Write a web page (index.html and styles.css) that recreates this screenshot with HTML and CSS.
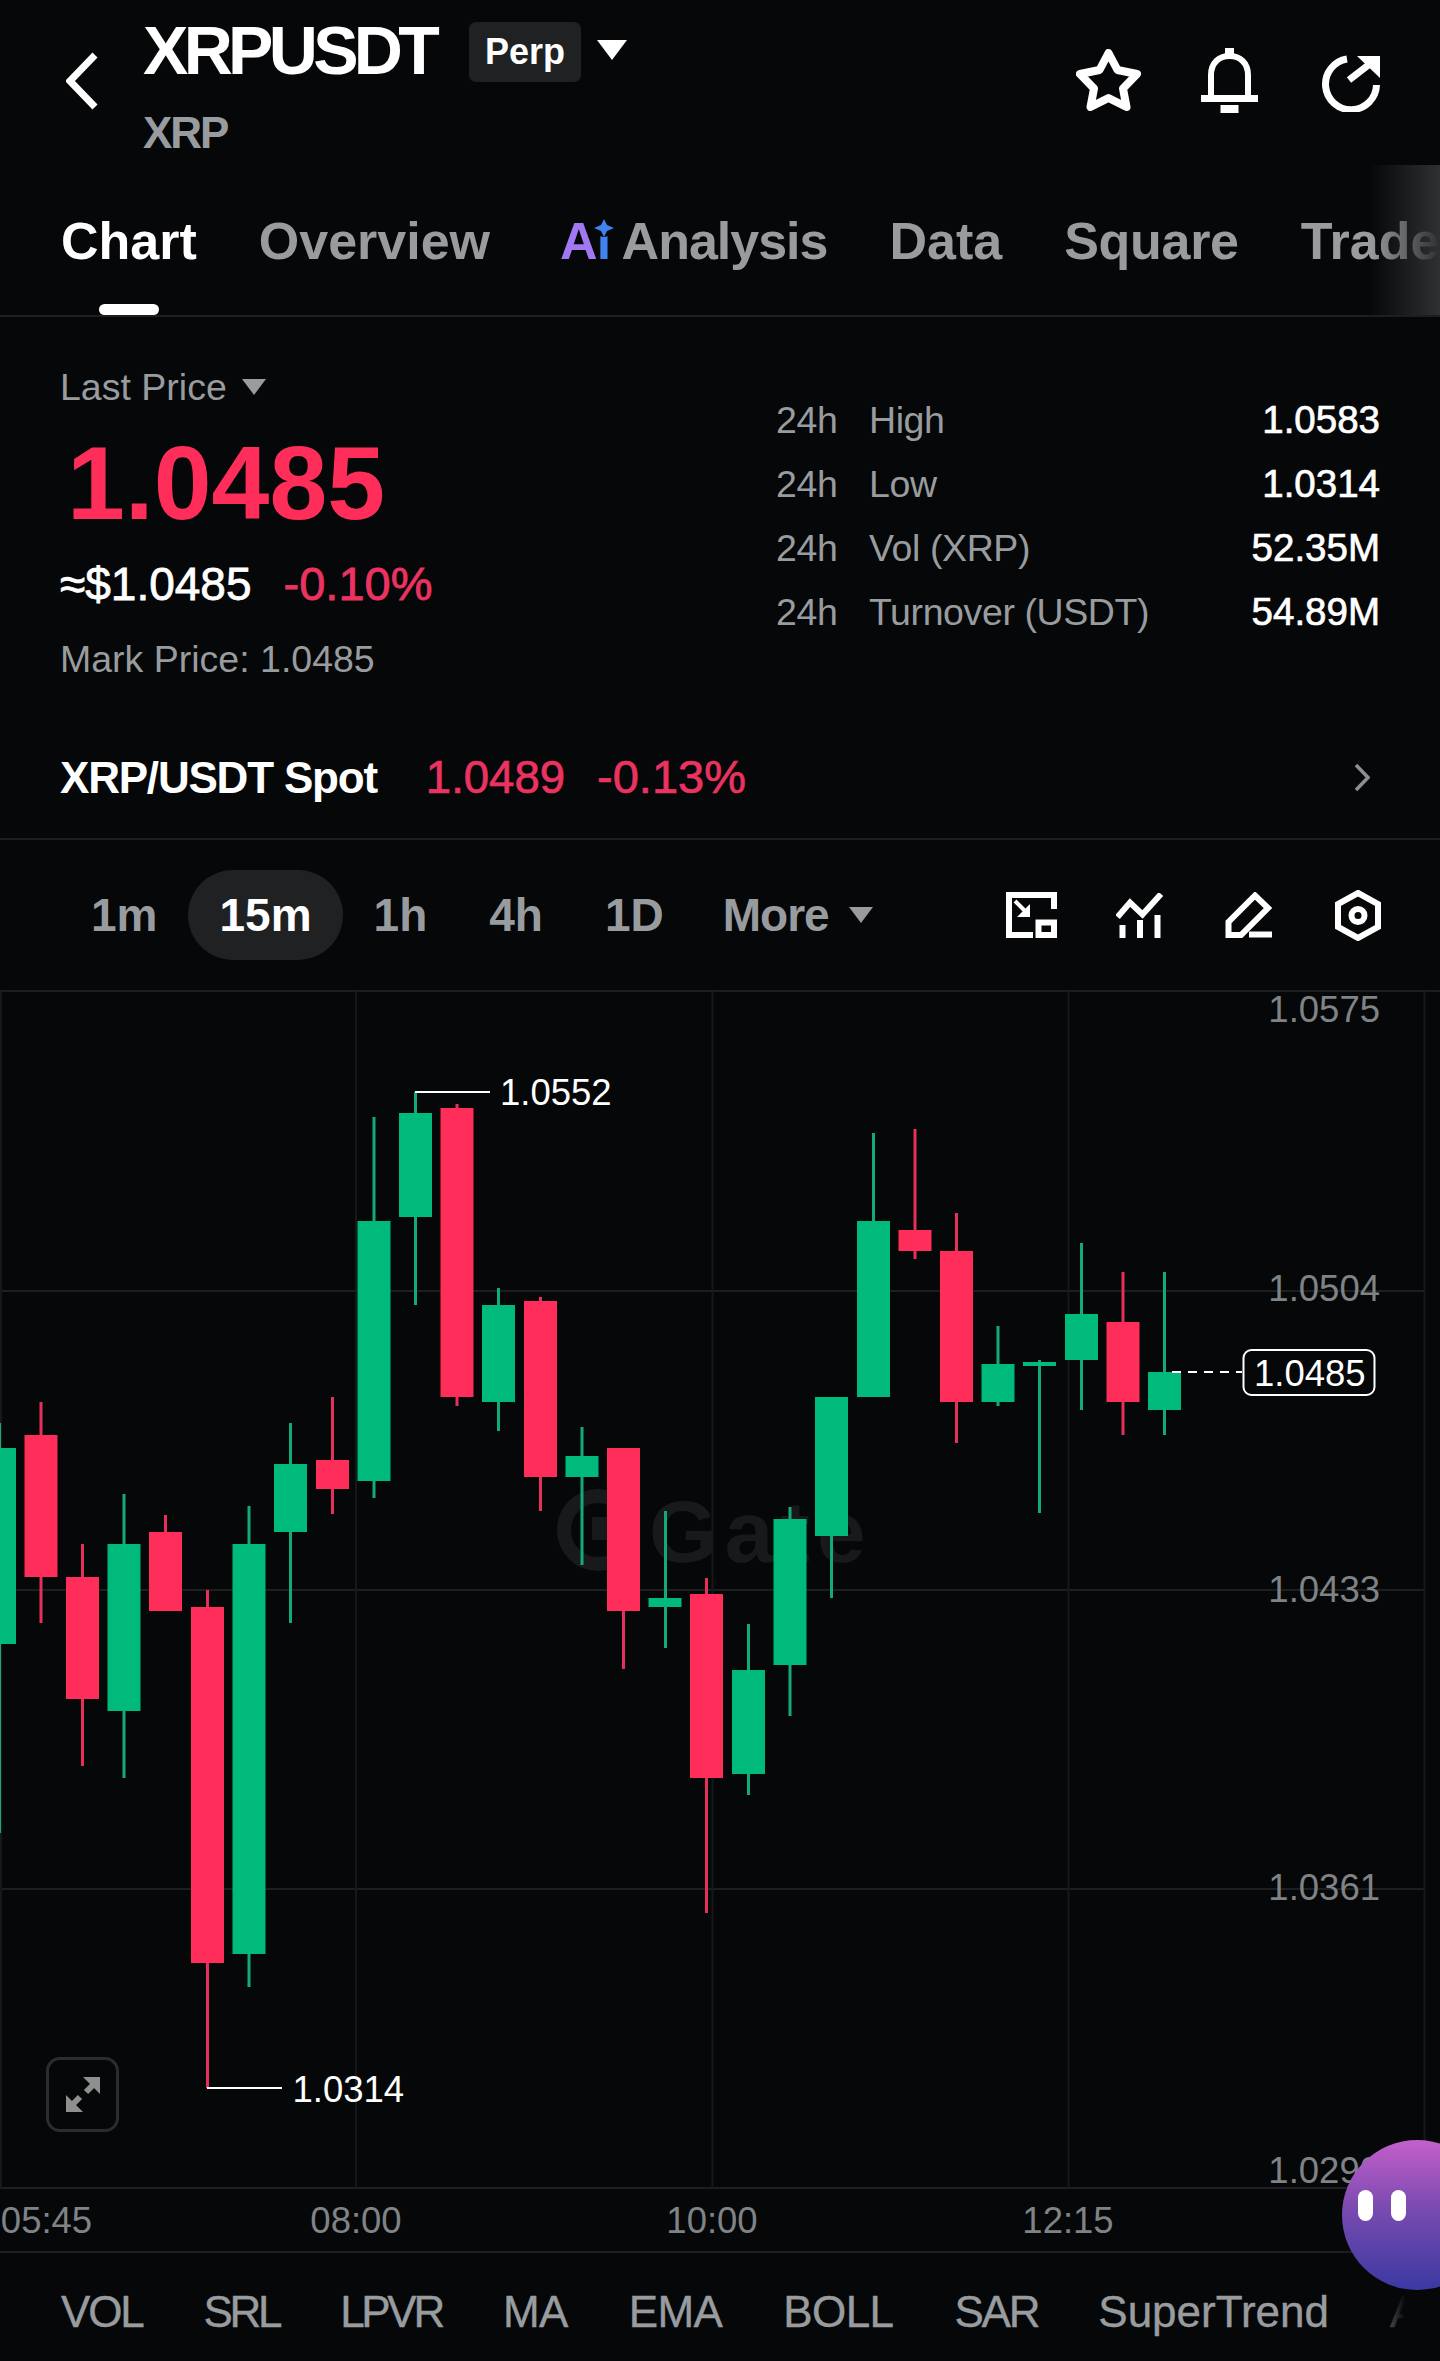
FILE: index.html
```html
<!DOCTYPE html>
<html lang="en">
<head>
    <meta charset="UTF-8">
    <meta name="viewport" content="width=device-width, initial-scale=1.0">
    <title>XRPUSDT Perp</title>
    <link rel="stylesheet" href="styles.css">
</head>
<body>
    <div class="page">
        <header class="topbar">
            <svg class="back-icon" viewBox="0 0 33 58"><path d="M29 3 L4 29 L29 55"/></svg>
            <div class="title-block">
                <div class="title-row">
                    <h1 class="symbol">XRPUSDT</h1>
                    <span class="perp-badge">Perp</span>
                    <span class="caret caret-white"></span>
                </div>
                <div class="base-coin">XRP</div>
            </div>
            <div class="top-icons">
                <svg class="star-icon" viewBox="0 0 65 62"><path d="M32.500 4 L41.500 21 L61 25 L47 39.500 L50.500 58 L32.500 49 L14.500 58 L18 39.500 L4 25 L23.500 21 Z"/></svg>
                <svg class="bell-icon" viewBox="0 0 57 65">
                    <path class="icon-line" d="M10 49 V27 C10 15 18 8 28.500 8 C39 8 47 15 47 27 V49"/>
                    <rect x="24" y="0" width="9" height="8"/>
                    <rect x="0" y="47" width="57" height="7"/>
                    <rect x="19.500" y="57" width="18" height="8"/>
                </svg>
                <svg class="share-icon" viewBox="0 0 59 58">
                    <path class="icon-line" d="M26 5 A 25.500 25.500 0 1 0 55.500 31"/>
                    <path class="icon-line" d="M28 26 L50 9"/>
                    <polygon points="36,2 59,2 59,24"/>
                </svg>
            </div>
        </header>

        <nav class="tabs">
            <a class="tab is-active">Chart</a>
            <a class="tab">Overview</a>
            <a class="tab tab-ai"><span class="ai-mark"><span class="ai-a">A</span><span class="ai-i">i</span><svg class="ai-star" viewBox="0 0 20 18"><path d="M10 0 L13 6 L20 9 L13 12 L10 18 L7 12 L0 9 L7 6 Z"/></svg></span> Analysis</a>
            <a class="tab">Data</a>
            <a class="tab tab-tight">Square</a>
            <a class="tab">Trade</a>
            <div class="tabs-fade"></div>
        </nav>

        <section class="stats">
            <div class="stats-main">
                <div class="price-col">
                    <div class="price-type">Last Price <span class="caret caret-gray"></span></div>
                    <div class="last-price">1.0485</div>
                    <div class="price-sub"><span class="usd-price">≈$1.0485</span><span class="price-change">-0.10%</span></div>
                    <div class="mark-price">Mark Price: 1.0485</div>
                </div>
                <dl class="ticker">
                    <div class="ticker-row"><dt><span class="ticker-span">24h</span>High</dt><dd>1.0583</dd></div>
                    <div class="ticker-row"><dt><span class="ticker-span">24h</span>Low</dt><dd>1.0314</dd></div>
                    <div class="ticker-row"><dt><span class="ticker-span">24h</span>Vol (XRP)</dt><dd>52.35M</dd></div>
                    <div class="ticker-row"><dt><span class="ticker-span">24h</span>Turnover (USDT)</dt><dd>54.89M</dd></div>
                </dl>
            </div>
            <div class="spot-row">
                <span class="spot-name">XRP/USDT Spot</span>
                <span class="spot-price">1.0489</span>
                <span class="spot-change">-0.13%</span>
                <svg class="spot-arrow" viewBox="0 0 16 29"><path d="M2 2 L14 14.500 L2 27"/></svg>
            </div>
        </section>

        <div class="timeframes">
            <button class="tf">1m</button>
            <button class="tf is-active">15m</button>
            <button class="tf">1h</button>
            <button class="tf">4h</button>
            <button class="tf">1D</button>
            <button class="tf tf-more">More <span class="caret caret-gray"></span></button>
            <div class="tf-icons">
                <svg class="tf-icon-1" viewBox="0 0 51 46">
                    <path class="icon-line" d="M27 43 H3 V3 H48 V17"/>
                    <rect class="icon-line" x="32.500" y="30.500" width="15.500" height="12.500"/>
                    <path class="icon-line thin" d="M9 9 L20 20"/>
                    <polygon points="24,12 24,25 11,25"/>
                </svg>
                <svg class="tf-icon-2" viewBox="0 0 47 45">
                    <path class="icon-line" d="M1.500 24 L14 9.500 L26.500 21.500 L45 1"/>
                    <rect x="3.500" y="32" width="6" height="13"/>
                    <rect x="21" y="27" width="6" height="18"/>
                    <rect x="38.500" y="22" width="6" height="23"/>
                </svg>
                <svg class="tf-icon-3" viewBox="0 0 47 46">
                    <path class="icon-line" d="M30 3.500 L43 16 L16 43 H3.500 V30 Z"/>
                    <rect x="24" y="39.500" width="23" height="6"/>
                </svg>
                <svg class="tf-icon-4" viewBox="0 0 46 51">
                    <path class="icon-line" d="M23 3 L43 14 V37 L23 48 L3 37 V14 Z"/>
                    <circle class="icon-line" cx="23" cy="25.500" r="6.500"/>
                </svg>
            </div>
        </div>

        <div class="chart">
            <svg class="chart-canvas" viewBox="0 990 1440 1265">
                <g class="grid">
                    <path d="M0 991 H1440 M0 1291 H1424 M0 1590 H1424 M0 1889 H1424 M0 2188 H1440 M0 2252 H1440"/>
                    <path d="M1 991 V2188 M356 991 V2188 M712.500 991 V2188 M1068.500 991 V2188 M1424.500 991 V2188"/>
                </g>

                <g class="watermark">
                    <path class="watermark-ring" d="M623 1507 A 34 34 0 1 0 623 1553"/>
                    <rect x="592" y="1517" width="22" height="23"/>
                    <text x="649" y="1562">Gate</text>
                </g>

                <g class="wick-up">
                    <rect x="-2" y="1423" width="3" height="410"/>
                    <rect x="122.500" y="1494" width="3" height="284"/>
                    <rect x="247.500" y="1506" width="3" height="481"/>
                    <rect x="289" y="1423" width="3" height="200"/>
                    <rect x="372.500" y="1117" width="3" height="381"/>
                    <rect x="414" y="1092" width="3" height="213"/>
                    <rect x="497" y="1288" width="3" height="143"/>
                    <rect x="580.500" y="1427" width="3" height="138"/>
                    <rect x="664" y="1511" width="3" height="137"/>
                    <rect x="747" y="1624" width="3" height="171"/>
                    <rect x="788.500" y="1507" width="3" height="209"/>
                    <rect x="830" y="1397" width="3" height="201"/>
                    <rect x="872" y="1133" width="3" height="264"/>
                    <rect x="996.500" y="1326" width="3" height="80"/>
                    <rect x="1038" y="1360" width="3" height="153"/>
                    <rect x="1080" y="1243" width="3" height="167"/>
                    <rect x="1163" y="1272" width="3" height="163"/>
                </g>
                <g class="wick-down">
                    <rect x="39.500" y="1402" width="3" height="221"/>
                    <rect x="81" y="1544" width="3" height="222"/>
                    <rect x="164" y="1515" width="3" height="96"/>
                    <rect x="206" y="1590" width="3" height="498"/>
                    <rect x="331" y="1397" width="3" height="117"/>
                    <rect x="455.500" y="1104" width="3" height="302"/>
                    <rect x="539" y="1297" width="3" height="214"/>
                    <rect x="622" y="1448" width="3" height="221"/>
                    <rect x="705" y="1578" width="3" height="335"/>
                    <rect x="913.500" y="1129" width="3" height="130"/>
                    <rect x="955" y="1213" width="3" height="230"/>
                    <rect x="1121.500" y="1272" width="3" height="163"/>
                </g>
                <g class="body-up">
                    <rect x="-17" y="1448" width="33" height="196"/>
                    <rect x="107.500" y="1544" width="33" height="167"/>
                    <rect x="232.500" y="1544" width="33" height="410"/>
                    <rect x="274" y="1464" width="33" height="68"/>
                    <rect x="357.500" y="1221" width="33" height="260"/>
                    <rect x="399" y="1113" width="33" height="104"/>
                    <rect x="482" y="1305" width="33" height="97"/>
                    <rect x="565.500" y="1456" width="33" height="21"/>
                    <rect x="648.500" y="1598" width="33" height="9"/>
                    <rect x="732" y="1670" width="33" height="104"/>
                    <rect x="773.500" y="1519" width="33" height="146"/>
                    <rect x="815" y="1397" width="33" height="139"/>
                    <rect x="857" y="1221" width="33" height="176"/>
                    <rect x="981.500" y="1364" width="33" height="38"/>
                    <rect x="1023" y="1362" width="33" height="4"/>
                    <rect x="1065" y="1314" width="33" height="46"/>
                    <rect x="1148" y="1372" width="33" height="38"/>
                </g>
                <g class="body-down">
                    <rect x="24.500" y="1435" width="33" height="142"/>
                    <rect x="66" y="1577" width="33" height="122"/>
                    <rect x="149" y="1532" width="33" height="79"/>
                    <rect x="191" y="1607" width="33" height="356"/>
                    <rect x="316" y="1460" width="33" height="29"/>
                    <rect x="440.500" y="1108" width="33" height="289"/>
                    <rect x="524" y="1301" width="33" height="176"/>
                    <rect x="607" y="1448" width="33" height="163"/>
                    <rect x="690" y="1594" width="33" height="184"/>
                    <rect x="898.500" y="1230" width="33" height="21"/>
                    <rect x="940" y="1251" width="33" height="151"/>
                    <rect x="1106.500" y="1322" width="33" height="80"/>
                </g>

                <path class="marker-line" d="M415 1092 H490 M207 2088 H282"/>
                <path class="last-dash" d="M1172 1372 H1242"/>
                <rect class="last-box" x="1243.500" y="1350" width="131" height="45" rx="8"/>

                <text class="marker-label" x="500" y="1105">1.0552</text>
                <text class="marker-label" x="292.500" y="2102">1.0314</text>
                <text class="marker-label" x="1254" y="1386">1.0485</text>

                <g class="axis-price">
                    <text x="1380" y="1022">1.0575</text>
                    <text x="1380" y="1301">1.0504</text>
                    <text x="1380" y="1602">1.0433</text>
                    <text x="1380" y="1900">1.0361</text>
                    <text x="1380" y="2183">1.0290</text>
                </g>
                <g class="axis-time">
                    <text x="46.500" y="2233">05:45</text>
                    <text x="356" y="2233">08:00</text>
                    <text x="712" y="2233">10:00</text>
                    <text x="1068" y="2233">12:15</text>
                </g>
            </svg>
            <button class="expand-btn">
                <svg viewBox="0 0 34 35">
                    <polygon points="17,0 34,0 34,17"/>
                    <polygon points="0,18 0,35 17,35"/>
                    <path class="expand-shaft" d="M27 8 L20 15 M14 20 L7 27"/>
                </svg>
            </button>
        </div>

        <div class="indicators">
            <a class="ind">VOL</a>
            <a class="ind ind-tight">SRL</a>
            <a class="ind ind-tight">LPVR</a>
            <a class="ind ind-loose">MA</a>
            <a class="ind ind-loose">EMA</a>
            <a class="ind ind-loose">BOLL</a>
            <a class="ind">SAR</a>
            <a class="ind ind-wide">SuperTrend</a>
            <a class="ind">AVL</a>
            <div class="indicators-fade"></div>
        </div>

        <div class="assistant"><span class="assistant-eye"></span><span class="assistant-eye"></span></div>
    </div>
</body>
</html>
```

FILE: styles.css
```css
* {
    box-sizing: border-box;
}

body {
    margin: 0;
    background-color: #050708;
    font-family: "Liberation Sans", Arial, sans-serif;
}

.page {
    position: relative;
    width: 1440px;
    height: 2361px;
    overflow: hidden;
    color: #fff;
    background-color: #050708;
}

/* top bar */
.topbar {
    display: flex;
    height: 165px;
    padding-left: 66px;
}

.back-icon {
    width: 33px;
    height: 58px;
    margin-top: 52px;
    fill: none;
    stroke: #fff;
    stroke-width: 7;
}

.title-block {
    margin-left: 44px;
    padding-top: 17px;
}

.title-row {
    display: flex;
    align-items: center;
    height: 66px;
}

.symbol {
    margin: 0;
    font-size: 68px;
    line-height: 66px;
    font-weight: 700;
    letter-spacing: -4.700px;
}

.perp-badge {
    display: flex;
    align-items: center;
    justify-content: center;
    width: 112px;
    height: 60px;
    margin: 4px 0 0 34px;
    font-size: 36px;
    font-weight: 700;
    background-color: #1f2122;
    border-radius: 7px;
}

.caret {
    display: inline-block;
    width: 0;
    height: 0;
    border-style: solid;
    border-color: transparent;
    border-bottom-width: 0;
}

.caret-white {
    margin: 0 0 0 16px;
    border-width: 20px 15px 0;
    border-top-color: #fff;
}

.caret-gray {
    border-width: 16px 12px 0;
    border-top-color: #999c9f;
}

.base-coin {
    margin-top: 28px;
    font-size: 44px;
    line-height: 44px;
    font-weight: 700;
    letter-spacing: -2px;
    color: #999c9f;
}

.top-icons {
    display: flex;
    gap: 60px;
    margin-left: auto;
    padding: 48px 60px 0 0;
    align-items: flex-start;
}

.top-icons svg {
    fill: #fff;
}

.icon-line {
    fill: none;
    stroke: #fff;
    stroke-width: 6;
}

.icon-line.thin {
    stroke-width: 4;
}

.star-icon {
    width: 65px;
    height: 62px;
    margin-top: 1px;
}

.star-icon path {
    fill: none;
    stroke: #fff;
    stroke-width: 8;
    stroke-linejoin: round;
}

.bell-icon {
    width: 57px;
    height: 65px;
    margin-right: 3px;
}

.share-icon {
    width: 59px;
    height: 58px;
    margin-top: 6px;
}

.share-icon .icon-line {
    stroke-width: 7;
}

/* tabs */
.tabs {
    position: relative;
    display: flex;
    gap: 62px;
    height: 152px;
    padding: 46px 0 0 61px;
    border-bottom: 2px solid #1c1e1f;
    font-size: 52px;
    line-height: 60px;
    font-weight: 700;
    white-space: nowrap;
    color: #999c9f;
    overflow: hidden;
}

.tab {
    position: relative;
    display: block;
    height: 60px;
    flex-shrink: 0;
}

.tab.is-active {
    color: #fff;
}

.tab.is-active::after {
    content: "";
    position: absolute;
    left: 50%;
    top: 93px;
    width: 60px;
    height: 11px;
    margin-left: -30px;
    background-color: #fff;
    border-radius: 6px;
}

.tab-ai {
    margin-left: 8px;
    letter-spacing: -1px;
}

.tab-tight {
    letter-spacing: -0.3px;
}

.ai-mark {
    position: relative;
    display: inline-block;
}

.ai-a {
    color: #a078f2;
}

.ai-i {
    color: #3f82f0;
}

.ai-star {
    position: absolute;
    right: -4px;
    top: 8px;
    width: 20px;
    height: 18px;
    fill: #3f82f0;
    background-color: #050708;
    border-radius: 50%;
}

.tabs-fade {
    position: absolute;
    right: 0;
    top: 0;
    bottom: 0;
    width: 70px;
    background: linear-gradient(to right, rgba(46, 47, 48, 0), #2f3031);
}

/* price and ticker block */
.stats {
    height: 523px;
    padding: 48px 60px 0 60px;
    border-bottom: 2px solid #1c1e1f;
}

.stats-main {
    display: flex;
}

.price-col {
    width: 716px;
}

.price-type {
    display: flex;
    align-items: center;
    gap: 15px;
    font-size: 37.500px;
    line-height: 44px;
    color: #999c9f;
}

.last-price {
    margin: 22px 0 0 7px;
    font-size: 104px;
    line-height: 104px;
    font-weight: 700;
    color: #ff2d5a;
}

.price-sub {
    display: flex;
    align-items: baseline;
    gap: 32px;
    margin-top: 24px;
    font-size: 46px;
    line-height: 50px;
    -webkit-text-stroke: 0.8px;
}

.price-change {
    font-size: 47px;
    color: #ea3360;
}

.mark-price {
    margin-top: 28px;
    font-size: 37.500px;
    line-height: 44px;
    color: #999c9f;
}

.ticker {
    flex: 1;
    margin: 23px 0 0;
}

.ticker-row {
    display: flex;
    justify-content: space-between;
    height: 64px;
    font-size: 37.500px;
    line-height: 64px;
}

.ticker-row dt {
    color: #999c9f;
    letter-spacing: -0.4px;
}

.ticker-span {
    display: inline-block;
    width: 93px;
}

.ticker-row dd {
    margin: 0;
    font-size: 38.500px;
    -webkit-text-stroke: 0.7px;
}

.spot-row {
    display: flex;
    align-items: baseline;
    margin-top: -1px;
    padding-top: 72px;
    font-size: 44px;
    line-height: 50px;
}

.spot-name {
    font-weight: 700;
    letter-spacing: -1.200px;
}

.spot-price {
    margin-left: 49px;
    font-size: 45.500px;
    color: #ea3360;
    -webkit-text-stroke: 0.7px;
}

.spot-change {
    margin-left: 32px;
    font-size: 47px;
    color: #ea3360;
    -webkit-text-stroke: 0.7px;
}

.spot-arrow {
    align-self: center;
    width: 16px;
    height: 29px;
    margin: 0 10px 0 auto;
    fill: none;
    stroke: #8d9093;
    stroke-width: 3.500;
}

/* timeframe row */
.timeframes {
    display: flex;
    align-items: center;
    height: 150px;
    padding: 0 59px 0 60px;
}

.tf {
    height: 90px;
    padding: 0 31px;
    font-family: inherit;
    font-size: 46px;
    font-weight: 700;
    color: #999c9f;
    background: none;
    border: none;
    border-radius: 45px;
}

.tf.is-active {
    color: #fff;
    background-color: #1f2122;
}

.tf-more {
    display: flex;
    align-items: center;
    gap: 20px;
    margin-left: -3px;
    letter-spacing: -1px;
}

.tf-icons {
    display: flex;
    align-items: center;
    margin-left: auto;
}

.tf-icons svg {
    fill: #fff;
}

.tf-icon-1 {
    width: 51px;
    height: 46px;
}

.tf-icon-2 {
    width: 47px;
    height: 45px;
    margin-left: 59.500px;
}

.tf-icon-3 {
    width: 47px;
    height: 46px;
    margin-left: 62px;
}

.tf-icon-4 {
    width: 46px;
    height: 51px;
    margin-left: 63px;
}

/* chart */
.chart {
    position: relative;
    height: 1265px;
}

.chart-canvas {
    display: block;
    width: 1440px;
    height: 1265px;
}

.grid path {
    fill: none;
    stroke: #1c1e1f;
    stroke-width: 2;
}

.grid path + path {
    stroke: #16181a;
}

.watermark {
    fill: #17191a;
}

.watermark-ring {
    fill: none;
    stroke: #17191a;
    stroke-width: 14;
}

.watermark text {
    font-size: 88px;
    font-weight: 700;
    letter-spacing: 7px;
}

.wick-up {
    fill: #14a97a;
}

.wick-down {
    fill: #e5305c;
}

.body-up {
    fill: #00ba7c;
}

.body-down {
    fill: #ff2d5a;
}

.marker-line {
    fill: none;
    stroke: #fff;
    stroke-width: 2;
}

.last-dash {
    fill: none;
    stroke: #fff;
    stroke-width: 2;
    stroke-dasharray: 9 7;
}

.last-box {
    fill: #050708;
    stroke: #fff;
    stroke-width: 2;
}

.marker-label {
    font-size: 36.500px;
    fill: #fff;
}

.axis-price text {
    font-size: 36.500px;
    text-anchor: end;
    fill: #808386;
}

.axis-time text {
    font-size: 36.500px;
    text-anchor: middle;
    fill: #808386;
}

.expand-btn {
    position: absolute;
    left: 46px;
    top: 1067px;
    display: flex;
    align-items: center;
    justify-content: center;
    width: 73px;
    height: 75px;
    padding: 0;
    background: none;
    border: 3px solid #2a2c2d;
    border-radius: 14px;
}

.expand-btn svg {
    width: 34px;
    height: 35px;
    fill: #8f8f8f;
}

.expand-shaft {
    fill: none;
    stroke: #8f8f8f;
    stroke-width: 6;
}

/* indicators */
.indicators {
    position: relative;
    display: flex;
    gap: 61px;
    padding: 32px 0 0 61px;
    font-size: 44px;
    line-height: 50px;
    white-space: nowrap;
    color: #999c9f;
    letter-spacing: -2.200px;
    -webkit-text-stroke: 0.4px;
}

.ind-tight {
    letter-spacing: -3.300px;
}

.ind-loose {
    letter-spacing: -0.6px;
}

.ind-wide {
    margin-left: -1px;
    letter-spacing: 0;
}

.indicators-fade {
    position: absolute;
    right: 0;
    top: 0;
    bottom: 0;
    width: 70px;
    background: linear-gradient(to right, rgba(5, 7, 8, 0), #050708 50%);
}

/* floating assistant */
.assistant {
    position: absolute;
    left: 1342px;
    top: 2140px;
    display: flex;
    gap: 18px;
    width: 150px;
    height: 150px;
    padding: 50px 0 0 16px;
    background: linear-gradient(to bottom, #c45fcb, #7a4bb0 45%, #3a39a2);
    border-radius: 50%;
}

.assistant-eye {
    width: 15px;
    height: 31px;
    background-color: #fff;
    border-radius: 8px;
}
```
